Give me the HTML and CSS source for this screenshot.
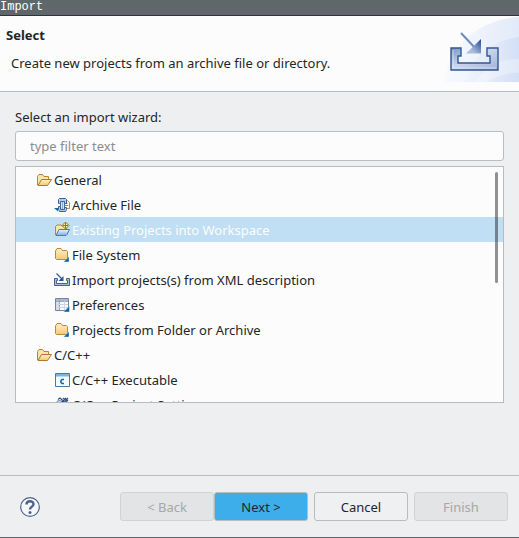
FILE: index.html
```html
<!DOCTYPE html>
<html lang="en">
<head>
<meta charset="utf-8">
<meta name="viewport" content="width=device-width, initial-scale=1">
<title>Import</title>
<link rel="stylesheet" href="styles.css">
</head>
<body>
<svg class="defs" aria-hidden="true">
  <defs>
    <linearGradient id="gold" x1="0" y1="0" x2="0" y2="1"><stop offset="0" stop-color="#fff0c0"/><stop offset="1" stop-color="#f5c877"/></linearGradient>
    <linearGradient id="blue" x1="0" y1="0" x2="0" y2="1"><stop offset="0" stop-color="#eaf4ff"/><stop offset="1" stop-color="#7fabe6"/></linearGradient>
    <linearGradient id="steel" x1="0" y1="0" x2="1" y2="1"><stop offset="0" stop-color="#7893c4"/><stop offset=".45" stop-color="#c9d6ec"/><stop offset="1" stop-color="#9fb2d8"/></linearGradient>
    <linearGradient id="head" x1="0" y1="1" x2="1" y2="0"><stop offset=".3" stop-color="#a9bde0"/><stop offset="1" stop-color="#23488c"/></linearGradient>
    <linearGradient id="glow" x1="0" y1="0" x2="1" y2="0"><stop offset="0" stop-color="#f8faff"/><stop offset="1" stop-color="#e2eaf9"/></linearGradient>
    <linearGradient id="glow2" x1="0" y1="0" x2="1" y2="0"><stop offset="0" stop-color="#e6eefb" stop-opacity=".3"/><stop offset="1" stop-color="#c9d8f3"/></linearGradient>
  </defs>
  <symbol id="open-folder" viewBox="0 0 16 16">
    <path d="M1.500 13V4.500L3 2.500h3.500L8 4.500h4.500V7" fill="#fbe3ab" stroke="#b98235"/>
    <path d="M2 13.500L5.500 7.500H15.500L11.500 13.500z" fill="url(#gold)" stroke="#b5762a"/>
  </symbol>
  <symbol id="folder" viewBox="0 0 16 16">
    <path d="M1.500 4L3 1.500h4L8.500 3.500h4l1 1V11.500l-1 1H2.500l-1-1z" fill="url(#gold)" stroke="#bb883c"/>
    <path d="M15 9.500v5.500H9.500z" fill="#0b63a8" stroke="#fff" stroke-width=".4"/>
  </symbol>
  <symbol id="archive" viewBox="0 0 16 16">
    <path d="M10 3.500h3.500l2 2v6H10" fill="#fff8e0" stroke="#a8935f"/>
    <path d="M11 6.500h2.500M11 8.500h3" stroke="#9a8754"/>
    <path d="M5.500 6.500h-1v-4l1-1h6l1 1v4h-2v-2h-4v2z" fill="#b9cbe8" stroke="#3e5f99"/>
    <path d="M6.500 4.500h4v8h-4z" fill="#d6e1f3" stroke="#48689f"/>
    <path d="M8.500 5v7" stroke="#8fa8d0"/>
    <path d="M4.500 9.500h2v3h4v-2h2v2l-1 2h-6l-1-2z" fill="#b9cbe8" stroke="#3e5f99"/>
    <path d="M0 11l4 3.500V11z" fill="#08719d"/>
  </symbol>
  <symbol id="project" viewBox="0 0 16 16">
    <path d="M1.500 13V4.500L3 3h4L8.500 4.500h4V8" fill="#fbe3ab" stroke="#b98235"/>
    <path d="M2 13.500L5 7.500h10.500L13 12.500l-1 1z" fill="url(#blue)" stroke="#4a79bd"/>
    <path d="M11.500 0L15 3.500 11.500 7 8 3.500z" fill="#fff1a6" stroke="#8c742b"/><path d="M11.500 1v5M9 3.500h5" stroke="#8c742b"/>
  </symbol>
  <symbol id="import" viewBox="0 0 16 16">
    <path d="M.5 6.500h3v2h-1v3h11v-3h-1v-2h3v7H.5z" fill="#a9bde0" stroke="#426199"/>
    <path d="M2.500 1.500L8 7" stroke="#286195" stroke-width="1.300" fill="none"/><path d="M9.500 4v5h-5z" fill="#28588f"/>
  </symbol>
  <symbol id="prefs" viewBox="0 0 16 16">
    <path d="M1.500 1.500h13v12h-13z" fill="#f7faff" stroke="#78859b"/>
    <path d="M2 2h12v2H2z" fill="#a9bad4"/><path d="M2 4h3v9H2z" fill="#d5deec"/>
    <path d="M2 4.500h12M5.500 2v11" stroke="#9aa8be"/>
    <path d="M2 7.500h12M2 10.500h12M10.500 4v9" stroke="#cfd6e2"/>
    <path d="M15.500 9v6h-6z" fill="#0b63a8" stroke="#fff" stroke-width=".4"/>
  </symbol>
  <symbol id="cexe" viewBox="0 0 16 16">
    <path d="M1.500 1.500h14v13h-14z" fill="#f3faff" stroke="#49799d"/>
    <path d="M2 2h13v2H2z" fill="#78b5df"/><path d="M2 4.500h13" stroke="#b6d7ed"/>
    <path d="M10 7.500H8L7 8.500v2l1 1h2" fill="none" stroke="#17679f" stroke-width="1.600"/>
  </symbol>
  <symbol id="settings" viewBox="0 0 16 16">
    <circle cx="5.500" cy="6.500" r="3" fill="#d1dff3" stroke="#587aab"/>
    <path d="M4 2.500L6 1l8 7M7 6l5-5M9 1l5 5M14 1l-3 3M10 7l4-4" fill="none" stroke="#35517f" stroke-width="1.300"/>
    <path d="M2 13.500h10" stroke="#587aab"/>
  </symbol>
</svg>
<main class="dialog">
  <div class="titlebar">Import</div>
  <header class="banner">
    <div class="banner-text">
      <h1>Select</h1>
      <p>Create new projects from an archive file or directory.</p>
    </div>
    <svg class="banner-art" viewBox="0 0 75 66" aria-hidden="true">
      <path d="M0 66C4 32 32 4 75 1v65z" fill="url(#glow)"/>
      <path d="M20 66C28 40 46 25 75 21v45z" fill="url(#glow2)" opacity=".6"/>
      <path d="M48 48C57 45 66 43 75 43v14C65 56 53 60 42 66H30z" fill="#fff" opacity=".3"/>
      <path d="M7 32h10v8h-3v7h32v-7h-3v-8h11v22H7z" fill="url(#steel)" stroke="#345791" stroke-width="1.400"/>
      <path d="M9 34v18h43" fill="none" stroke="#e5edfa" opacity=".7"/>
      <path d="M17 17l15 16" stroke="#6c8abb" stroke-width="2"/>
      <path d="M37 23v14.500H22z" fill="url(#head)"/>
    </svg>
  </header>
  <section class="content">
    <label for="filter">Select an import wizard:</label>
    <input id="filter" type="text" placeholder="type filter text">
    <div class="tree-frame">
      <ul class="tree" role="tree" aria-label="Import wizards">
        <li class="row" role="treeitem" aria-level="1" aria-expanded="true"><svg class="icon"><use href="#open-folder"/></svg>General</li>
        <li class="row child" role="treeitem" aria-level="2"><svg class="icon"><use href="#archive"/></svg>Archive File</li>
        <li class="row child selected" role="treeitem" aria-level="2" aria-selected="true"><svg class="icon"><use href="#project"/></svg>Existing Projects into Workspace</li>
        <li class="row child" role="treeitem" aria-level="2"><svg class="icon"><use href="#folder"/></svg>File System</li>
        <li class="row child" role="treeitem" aria-level="2"><svg class="icon"><use href="#import"/></svg>Import projects(s) from XML description</li>
        <li class="row child" role="treeitem" aria-level="2"><svg class="icon"><use href="#prefs"/></svg>Preferences</li>
        <li class="row child" role="treeitem" aria-level="2"><svg class="icon"><use href="#folder"/></svg>Projects from Folder or Archive</li>
        <li class="row" role="treeitem" aria-level="1" aria-expanded="true"><svg class="icon"><use href="#open-folder"/></svg>C/C++</li>
        <li class="row child" role="treeitem" aria-level="2"><svg class="icon"><use href="#cexe"/></svg>C/C++ Executable</li>
        <li class="row child" role="treeitem" aria-level="2"><svg class="icon"><use href="#settings"/></svg>C/C++ Project Settings</li>
      </ul>
      <div class="thumb"></div>
    </div>
  </section>
  <footer class="actions">
    <button class="help" type="button" aria-label="Help">
      <svg viewBox="0 0 20 20" aria-hidden="true">
        <circle cx="10" cy="10" r="9.300" fill="#f6f7fa" stroke="#4e628c" stroke-width="1.200"/>
        <path d="M6.500 7.500C6.500 3.300 13.500 3.300 13.500 7.200 13.500 9.700 10 9.600 10 12.500" fill="none" stroke="#4e628c" stroke-width="2.400"/>
        <circle cx="10" cy="15.400" r="1.500" fill="#4e628c"/>
      </svg>
    </button>
    <div class="nav">
      <button class="btn" type="button" disabled>&lt; Back</button>
      <button class="btn primary" type="button">Next &gt;</button>
    </div>
    <button class="btn" type="button">Cancel</button>
    <button class="btn" type="button" disabled>Finish</button>
  </footer>
</main>
</body>
</html>
```
FILE: styles.css
```css
* { box-sizing: border-box; }

body {
  margin: 0;
  background: #eeeff1;
  color: #232629;
  font: 13px/20px "Noto Sans", sans-serif;
}

.defs { position: absolute; width: 0; height: 0; }

.dialog {
  display: flex;
  flex-direction: column;
  height: 100vh;
  border-bottom: 1px solid #5f676a;
}

.titlebar {
  height: 16px;
  border-bottom: 1px solid #2f343a;
  background: #5f676a;
  color: #fff;
  font: 12px/14px "Liberation Mono", monospace;
}

.banner {
  display: flex;
  justify-content: space-between;
  height: 76px;
  border-bottom: 1px solid #b9bcbe;
  background: #fcfcfc;
}

.banner-text { padding: 9px 6px; }
h1 { margin: 0; font-size: 13px; line-height: 20px; }
p { margin: 8px 0 0 5px; }
.banner-art { flex: none; width: 75px; height: 66px; }

.content {
  display: flex;
  flex: 1;
  flex-direction: column;
  min-height: 0;
  padding: 15px 15px 72px;
}

#filter {
  flex: none;
  height: 30px;
  margin: 4px 0 5px;
  padding: 0 14px;
  border: 1px solid #bbbdbf;
  border-radius: 3px;
  background: #fcfcfc;
  color: inherit;
  font: inherit;
}
#filter::placeholder { color: #8b8d8e; opacity: 1; }

.tree-frame {
  position: relative;
  flex: 1;
  min-height: 0;
  border: 1px solid #b9bbbd;
  background: #fcfcfc;
}

.tree {
  height: 100%;
  margin: 0;
  padding: 0;
  overflow-y: auto;
  list-style: none;
  scrollbar-width: none;
}

.row {
  display: flex;
  align-items: center;
  gap: 2px;
  height: 25px;
  padding-left: 20px;
  white-space: nowrap;
}
.row.child { padding-left: 38px; }
.row.selected { background: #c0dff4; color: #fcfcfc; }
.icon { flex: none; width: 16px; height: 16px; }

.thumb {
  position: absolute;
  top: 5px;
  right: 5px;
  width: 3px;
  height: 111px;
  border-radius: 2px;
  background: rgb(35 38 41 / 50%);
}

.actions {
  display: flex;
  align-items: center;
  gap: 6px;
  height: 62px;
  padding: 0 11px 0 20px;
  border-top: 1px solid #b9bcbe;
}

.help {
  width: 20px;
  height: 20px;
  margin-right: auto;
  padding: 0;
  border: 0;
  background: none;
}
.help svg { display: block; }

.nav { display: flex; }

.btn {
  width: 94px;
  height: 29px;
  padding: 0;
  border: 1px solid #b9bbbd;
  border-radius: 3px;
  background: #eff0f1;
  color: #232629;
  font: inherit;
}
.btn:disabled { border-color: #d0d2d4; background: #e3e4e6; color: #a5a7a9; }
.btn.primary { background: #3daee9; }
```
